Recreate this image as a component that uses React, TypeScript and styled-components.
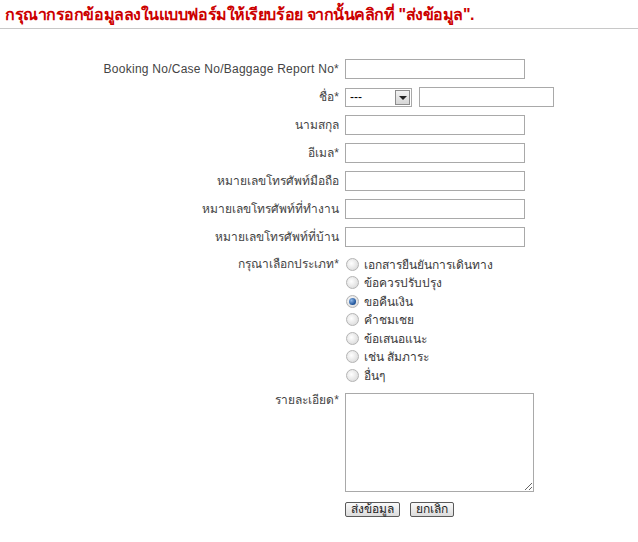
import { FC } from 'react';
import styled, { createGlobalStyle } from 'styled-components';

const GlobalStyle = createGlobalStyle`
  body {
    margin: 0;
    background: #fff;
    font-family: Tahoma, 'Liberation Sans', 'Noto Sans', sans-serif;
    font-size: 12px;
    color: #444;
  }
`;

const Page = styled.div``;

const Title = styled.h1`
  margin: 0;
  padding: 6px 0 4px 5px;
  font-size: 16px;
  font-weight: bold;
  line-height: 18px;
  color: #cc0000;
  letter-spacing: -0.45px;
  border-bottom: 1px solid #c8c8c8;
`;

const Form = styled.form`
  display: grid;
  grid-template-columns: 345px 1fr;
  row-gap: 8px;
  padding-top: 30px;
`;

const Label = styled.label<{ $lh?: number; $spread?: boolean }>`
  text-align: right;
  padding-right: 6px;
  line-height: ${(p) => p.$lh ?? 20}px;
  letter-spacing: ${(p) => (p.$spread ? '0.25px' : 'normal')};
  white-space: nowrap;
`;

const Field = styled.div`
  display: flex;
  align-items: center;
  gap: 7px;
`;

const TextInput = styled.input<{ $w?: number }>`
  box-sizing: border-box;
  width: ${(p) => p.$w ?? 180}px;
  height: 20px;
  margin: 0;
  border: 1px solid #a9a9a9;
  background: #fff;
  font: inherit;
`;

const Select = styled.div`
  box-sizing: border-box;
  width: 67px;
  height: 19px;
  border: 1px solid #a9a9a9;
  display: flex;
  align-items: center;
  justify-content: space-between;
  padding: 0 1px 0 4px;
  color: #000;
  font-size: 12px;
`;

const SelectArrow = styled.span`
  box-sizing: border-box;
  width: 15px;
  height: 15px;
  border: 1px solid #8c8c8c;
  background: linear-gradient(#f2f2f2, #d6d6d6);
  display: flex;
  align-items: center;
  justify-content: center;

  &::after {
    content: '';
    border-left: 4px solid transparent;
    border-right: 4px solid transparent;
    border-top: 4px solid #222;
    margin-top: 1px;
  }
`;

const RadioList = styled.div`
  display: flex;
  flex-direction: column;
`;

const RadioItem = styled.label`
  display: flex;
  align-items: center;
  gap: 5px;
  height: 18.5px;
  color: #3a3a3a;
`;

const RadioDot = styled.span<{ $checked?: boolean }>`
  box-sizing: border-box;
  width: 13px;
  height: 13px;
  margin-left: 1px;
  border-radius: 50%;
  border: 1px solid #b4b4b4;
  background: radial-gradient(circle at 40% 40%, #ffffff, #e0e0e0 70%, #cfcfcf);
  display: flex;
  align-items: center;
  justify-content: center;

  &::after {
    content: '';
    display: ${(p) => (p.$checked ? 'block' : 'none')};
    width: 7px;
    height: 7px;
    border-radius: 50%;
    background: radial-gradient(circle at 35% 35%, #8fb8e8, #1a4f96 70%, #0c2f66);
  }
`;

const TextArea = styled.textarea`
  box-sizing: border-box;
  width: 189px;
  height: 99px;
  margin: 0;
  border: 1px solid #a9a9a9;
  font: inherit;
`;

const Buttons = styled.div`
  display: flex;
  gap: 10px;
  padding-top: 2px;
`;

const Button = styled.button`
  box-sizing: border-box;
  height: 15px;
  padding: 0 5px;
  margin: 0;
  border: 1px solid #5a5a5a;
  border-radius: 2px;
  background: linear-gradient(#fafafa, #dcdcdc);
  font-family: inherit;
  font-size: 12px;
  line-height: 12px;
  color: #222;
`;

const types = [
  'เอกสารยืนยันการเดินทาง',
  'ข้อควรปรับปรุง',
  'ขอคืนเงิน',
  'คำชมเชย',
  'ข้อเสนอแนะ',
  'เช่น สัมภาระ',
  'อื่นๆ',
];

const App: FC = () => (
  <Page>
    <GlobalStyle />
    <Title>กรุณากรอกข้อมูลลงในแบบฟอร์มให้เรียบร้อย จากนั้นคลิกที่ "ส่งข้อมูล".</Title>
    <Form onSubmit={(e) => e.preventDefault()}>
      <Label $spread>Booking No/Case No/Baggage Report No*</Label>
      <Field>
        <TextInput />
      </Field>

      <Label>ชื่อ*</Label>
      <Field>
        <Select>
          ---
          <SelectArrow />
        </Select>
        <TextInput $w={135} />
      </Field>

      <Label>นามสกุล</Label>
      <Field>
        <TextInput />
      </Field>

      <Label>อีเมล*</Label>
      <Field>
        <TextInput />
      </Field>

      <Label>หมายเลขโทรศัพท์มือถือ</Label>
      <Field>
        <TextInput />
      </Field>

      <Label>หมายเลขโทรศัพท์ที่ทำงาน</Label>
      <Field>
        <TextInput />
      </Field>

      <Label>หมายเลขโทรศัพท์ที่บ้าน</Label>
      <Field>
        <TextInput />
      </Field>

      <Label $lh={18}>กรุณาเลือกประเภท*</Label>
      <RadioList>
        {types.map((t) => (
          <RadioItem key={t}>
            <RadioDot $checked={t === 'ขอคืนเงิน'} />
            {t}
          </RadioItem>
        ))}
      </RadioList>

      <Label $lh={14}>รายละเอียด*</Label>
      <Field>
        <TextArea />
      </Field>

      <span />
      <Buttons>
        <Button type="submit">ส่งข้อมูล</Button>
        <Button type="button">ยกเลิก</Button>
      </Buttons>
    </Form>
  </Page>
);

export default App;
